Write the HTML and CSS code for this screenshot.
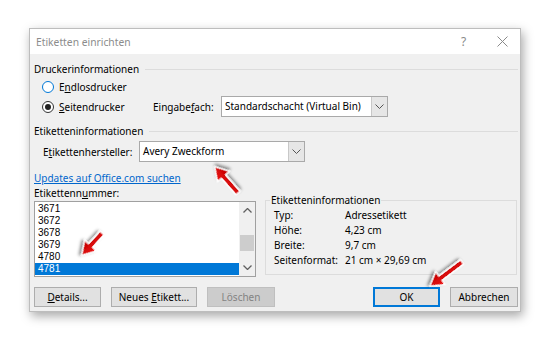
FILE: index.html
```html
<!DOCTYPE html>
<html lang="de">
<head>
    <meta charset="UTF-8">
    <title>Etiketten einrichten</title>
    <link rel="stylesheet" href="styles.css">
</head>
<body>

    <div class="dialog">
        <div class="titlebar">
            <span class="title">Etiketten einrichten</span>
            <span class="tb-help">?</span>
            <span class="tb-close">
                <svg width="11" height="11" viewBox="0 0 11 11"><path d="M0.5 0.5 L10.5 10.5 M10.5 0.5 L0.5 10.5" stroke="#8a8a8a" stroke-width="1" fill="none"/></svg>
            </span>
        </div>

        <div class="content">
            <div class="group-head"><span>Druckerinformationen</span></div>

            <div class="radio-row">
                <span class="radio focus"></span>
                <span>E<u>n</u>dlosdrucker</span>
            </div>
            <div class="radio-row second">
                <span class="radio checked"></span>
                <span class="radio-text"><u>S</u>eitendrucker</span>
                <span class="tray-label">Eingabe<u>f</u>ach:</span>
                <div class="combo tray">
                    <span class="combo-value">Standardschacht (Virtual Bin)</span>
                    <span class="combo-btn"><svg width="9" height="5" viewBox="0 0 9 5"><path d="M0.5 0.5 L4.5 4.5 L8.5 0.5" stroke="#555" fill="none"/></svg></span>
                </div>
            </div>

            <div class="group-head second"><span>Etiketteninformationen</span></div>

            <div class="maker-row">
                <span class="maker-label">E<u>t</u>ikettenhersteller:</span>
                <div class="combo maker">
                    <span class="combo-value">Avery Zweckform</span>
                    <span class="combo-btn"><svg width="9" height="5" viewBox="0 0 9 5"><path d="M0.5 0.5 L4.5 4.5 L8.5 0.5" stroke="#555" fill="none"/></svg></span>
                </div>
            </div>

            <div class="link-row"><a href="#" class="link">Updates auf Office.com suchen</a></div>

            <div class="lower">
                <div class="list-col">
                    <div class="list-label">Etikettenn<u>u</u>mmer:</div>
                    <div class="listbox">
                        <div class="items">
                            <div class="item">3671</div>
                            <div class="item">3672</div>
                            <div class="item">3678</div>
                            <div class="item">3679</div>
                            <div class="item">4780</div>
                            <div class="item selected">4781</div>
                        </div>
                        <div class="scrollbar">
                            <span class="sb-btn"><svg width="9" height="5" viewBox="0 0 9 5"><path d="M0.5 4.5 L4.5 0.5 L8.5 4.5" stroke="#606060" stroke-width="1.3" fill="none"/></svg></span>
                            <span class="sb-track"><span class="sb-thumb"></span></span>
                            <span class="sb-btn"><svg width="9" height="5" viewBox="0 0 9 5"><path d="M0.5 0.5 L4.5 4.5 L8.5 0.5" stroke="#606060" stroke-width="1.3" fill="none"/></svg></span>
                        </div>
                    </div>
                </div>

                <fieldset class="info">
                    <legend>Etiketteninformationen</legend>
                    <div class="info-grid">
                        <span>Typ:</span><span>Adressetikett</span>
                        <span>Höhe:</span><span>4,23 cm</span>
                        <span>Breite:</span><span>9,7 cm</span>
                        <span>Seitenformat:</span><span>21 cm × 29,69 cm</span>
                    </div>
                </fieldset>
            </div>

            <div class="buttons">
                <button class="btn w67"><u>D</u>etails...</button>
                <button class="btn w86">Neues <u>E</u>tikett...</button>
                <button class="btn w68" disabled>Löschen</button>
                <button class="btn w67 default">OK</button>
                <button class="btn w68">Abbrechen</button>
            </div>
        </div>
    </div>

    <svg class="arrows" width="550" height="342" viewBox="0 0 550 342">
        <defs>
            <linearGradient id="red" x1="0" y1="0" x2="0" y2="1">
                <stop offset="0" stop-color="#f01010"/>
                <stop offset="1" stop-color="#c00000"/>
            </linearGradient>
            <filter id="shadow" x="-50%" y="-50%" width="200%" height="200%">
                <feDropShadow dx="1.5" dy="2" stdDeviation="1.6" flood-color="#000" flood-opacity="0.45"/>
            </filter>
        </defs>
        <g transform="translate(238 193) rotate(-131.5)" filter="url(#shadow)">
            <path d="M0 -2.8 L22 -2.8 L22 -8 L35 0 L22 8 L22 2.8 L0 2.8 Z" fill="url(#red)" stroke="#fff" stroke-width="1.4" stroke-linejoin="round"/>
        </g>
        <g transform="translate(102 233) rotate(132.3)" filter="url(#shadow)">
            <path d="M0 -2.8 L17 -2.8 L17 -8 L30 0 L17 8 L17 2.8 L0 2.8 Z" fill="url(#red)" stroke="#fff" stroke-width="1.4" stroke-linejoin="round"/>
        </g>
        <g transform="translate(462 262) rotate(143.1)" filter="url(#shadow)">
            <path d="M0 -2.8 L27 -2.8 L27 -8 L40 0 L27 8 L27 2.8 L0 2.8 Z" fill="url(#red)" stroke="#fff" stroke-width="1.4" stroke-linejoin="round"/>
        </g>
    </svg>

</body>
</html>
```

FILE: styles.css
```css
body {
    margin: 0;
    background-color: #fff;
    font-family: 'Noto Sans', 'DejaVu Sans', sans-serif;
    font-size: 10px;
    color: #000;
    width: 550px;
    height: 342px;
    overflow: hidden;
    position: relative;
}

u {
    text-decoration-thickness: 1px;
    text-underline-offset: 1px;
}

.dialog {
    margin: 28px 0 0 29px;
    width: 490px;
    border: 1px solid #bdbdbd;
    background-color: #f0f0f0;
    box-shadow: 2px 4px 10px rgba(0, 0, 0, 0.35);
}

.titlebar {
    height: 25px;
    background-color: #fff;
    display: flex;
    align-items: center;
    padding-left: 6px;
}

.title {
    flex: 1;
    color: #8c8c8c;
    font-size: 10.3px;
}

.tb-help {
    color: #8a8a8a;
    font-size: 12px;
    width: 36px;
}

.tb-close {
    display: flex;
    width: 23px;
}

.content {
    padding: 7px 2px 4px 4px;
}

.group-head {
    display: flex;
    align-items: center;
    height: 16px;
}

.group-head::after {
    content: "";
    flex: 1;
    height: 1px;
    margin-left: 6px;
    background-color: #dcdcdc;
}

.group-head.second {
    margin-top: 6px;
}

.radio-row {
    display: flex;
    align-items: center;
    height: 18px;
    margin-top: 1px;
}

.radio-row.second {
    height: 21px;
    margin-top: 0;
}

.radio {
    width: 10px;
    height: 10px;
    border: 1px solid #333;
    border-radius: 50%;
    margin: 0 5px 0 8px;
    background-color: #fff;
    display: flex;
    align-items: center;
    justify-content: center;
}

.radio.focus {
    border-color: #0078d7;
}

.radio.checked::after {
    content: "";
    width: 6px;
    height: 6px;
    border-radius: 50%;
    background-color: #222;
}

.radio-text {
    width: 94px;
}

.tray-label {
    width: 68px;
}

.combo {
    display: flex;
    height: 19px;
    border: 1px solid #a9a9a9;
    background-color: #fff;
}

.combo.tray {
    width: 165px;
}

.combo.maker {
    width: 164px;
}

.combo-value {
    flex: 1;
    padding-left: 3px;
    line-height: 19px;
    white-space: nowrap;
    overflow: hidden;
}

.combo-btn {
    width: 15px;
    border-left: 1px solid #c8c8c8;
    background-color: #e6e6e6;
    display: flex;
    align-items: center;
    justify-content: center;
}

.maker-row {
    display: flex;
    align-items: center;
    margin-top: 2px;
}

.maker-label {
    padding-left: 9px;
    width: 96px;
}

.link-row {
    height: 16px;
    margin-top: 8px;
    line-height: 16px;
}

.link {
    color: #0066cc;
}

.lower {
    display: grid;
    grid-template-columns: 222px 252px;
    column-gap: 9px;
}

.list-label {
    height: 15px;
    line-height: 15px;
}

.listbox {
    display: flex;
    height: 74px;
    border: 1px solid #a0a0a0;
    background-color: #fff;
}

.items {
    flex: 1;
    padding-top: 1px;
}

.item {
    height: 12px;
    line-height: 12px;
    padding-left: 3px;
    font-family: 'Liberation Sans', sans-serif;
    font-size: 10px;
    overflow: hidden;
}

.item.selected {
    background-color: #0078d7;
    color: #fff;
}

.scrollbar {
    width: 16px;
    display: flex;
    flex-direction: column;
    background-color: #f0f0f0;
}

.sb-btn {
    height: 17px;
    display: flex;
    align-items: center;
    justify-content: center;
}

.sb-track {
    flex: 1;
    padding: 16px 1px 0 1px;
}

.sb-thumb {
    display: block;
    height: 16px;
    background-color: #cdcdcd;
}

.info {
    margin: 7px 0 0 0;
    padding: 0 0 0 4px;
    height: 82px;
    box-sizing: border-box;
    border: 1px solid #dcdcdc;
    min-width: 0;
}

.info legend {
    padding: 0 1px;
    line-height: 14px;
}

.info-grid {
    display: grid;
    grid-template-columns: 71px auto;
    grid-auto-rows: 15px;
    line-height: 15px;
    padding: 1px 0 0 4px;
}

.buttons {
    display: flex;
    gap: 10px;
    margin-top: 10px;
}

.btn {
    height: 20px;
    padding: 0;
    font-family: inherit;
    font-size: 10px;
    color: #000;
    background-color: #e1e1e1;
    border: 1px solid #adadad;
}

.btn:disabled {
    color: #838383;
    background-color: #cccccc;
    border-color: #bfbfbf;
}

.btn.default {
    margin-left: auto;
    border-color: #0078d7;
    box-shadow: inset 0 0 0 1px #0078d7;
}

.w67 {
    width: 67px;
}

.w68 {
    width: 68px;
}

.w86 {
    width: 86px;
}

.arrows {
    position: absolute;
    left: 0;
    top: 0;
    pointer-events: none;
}
```
